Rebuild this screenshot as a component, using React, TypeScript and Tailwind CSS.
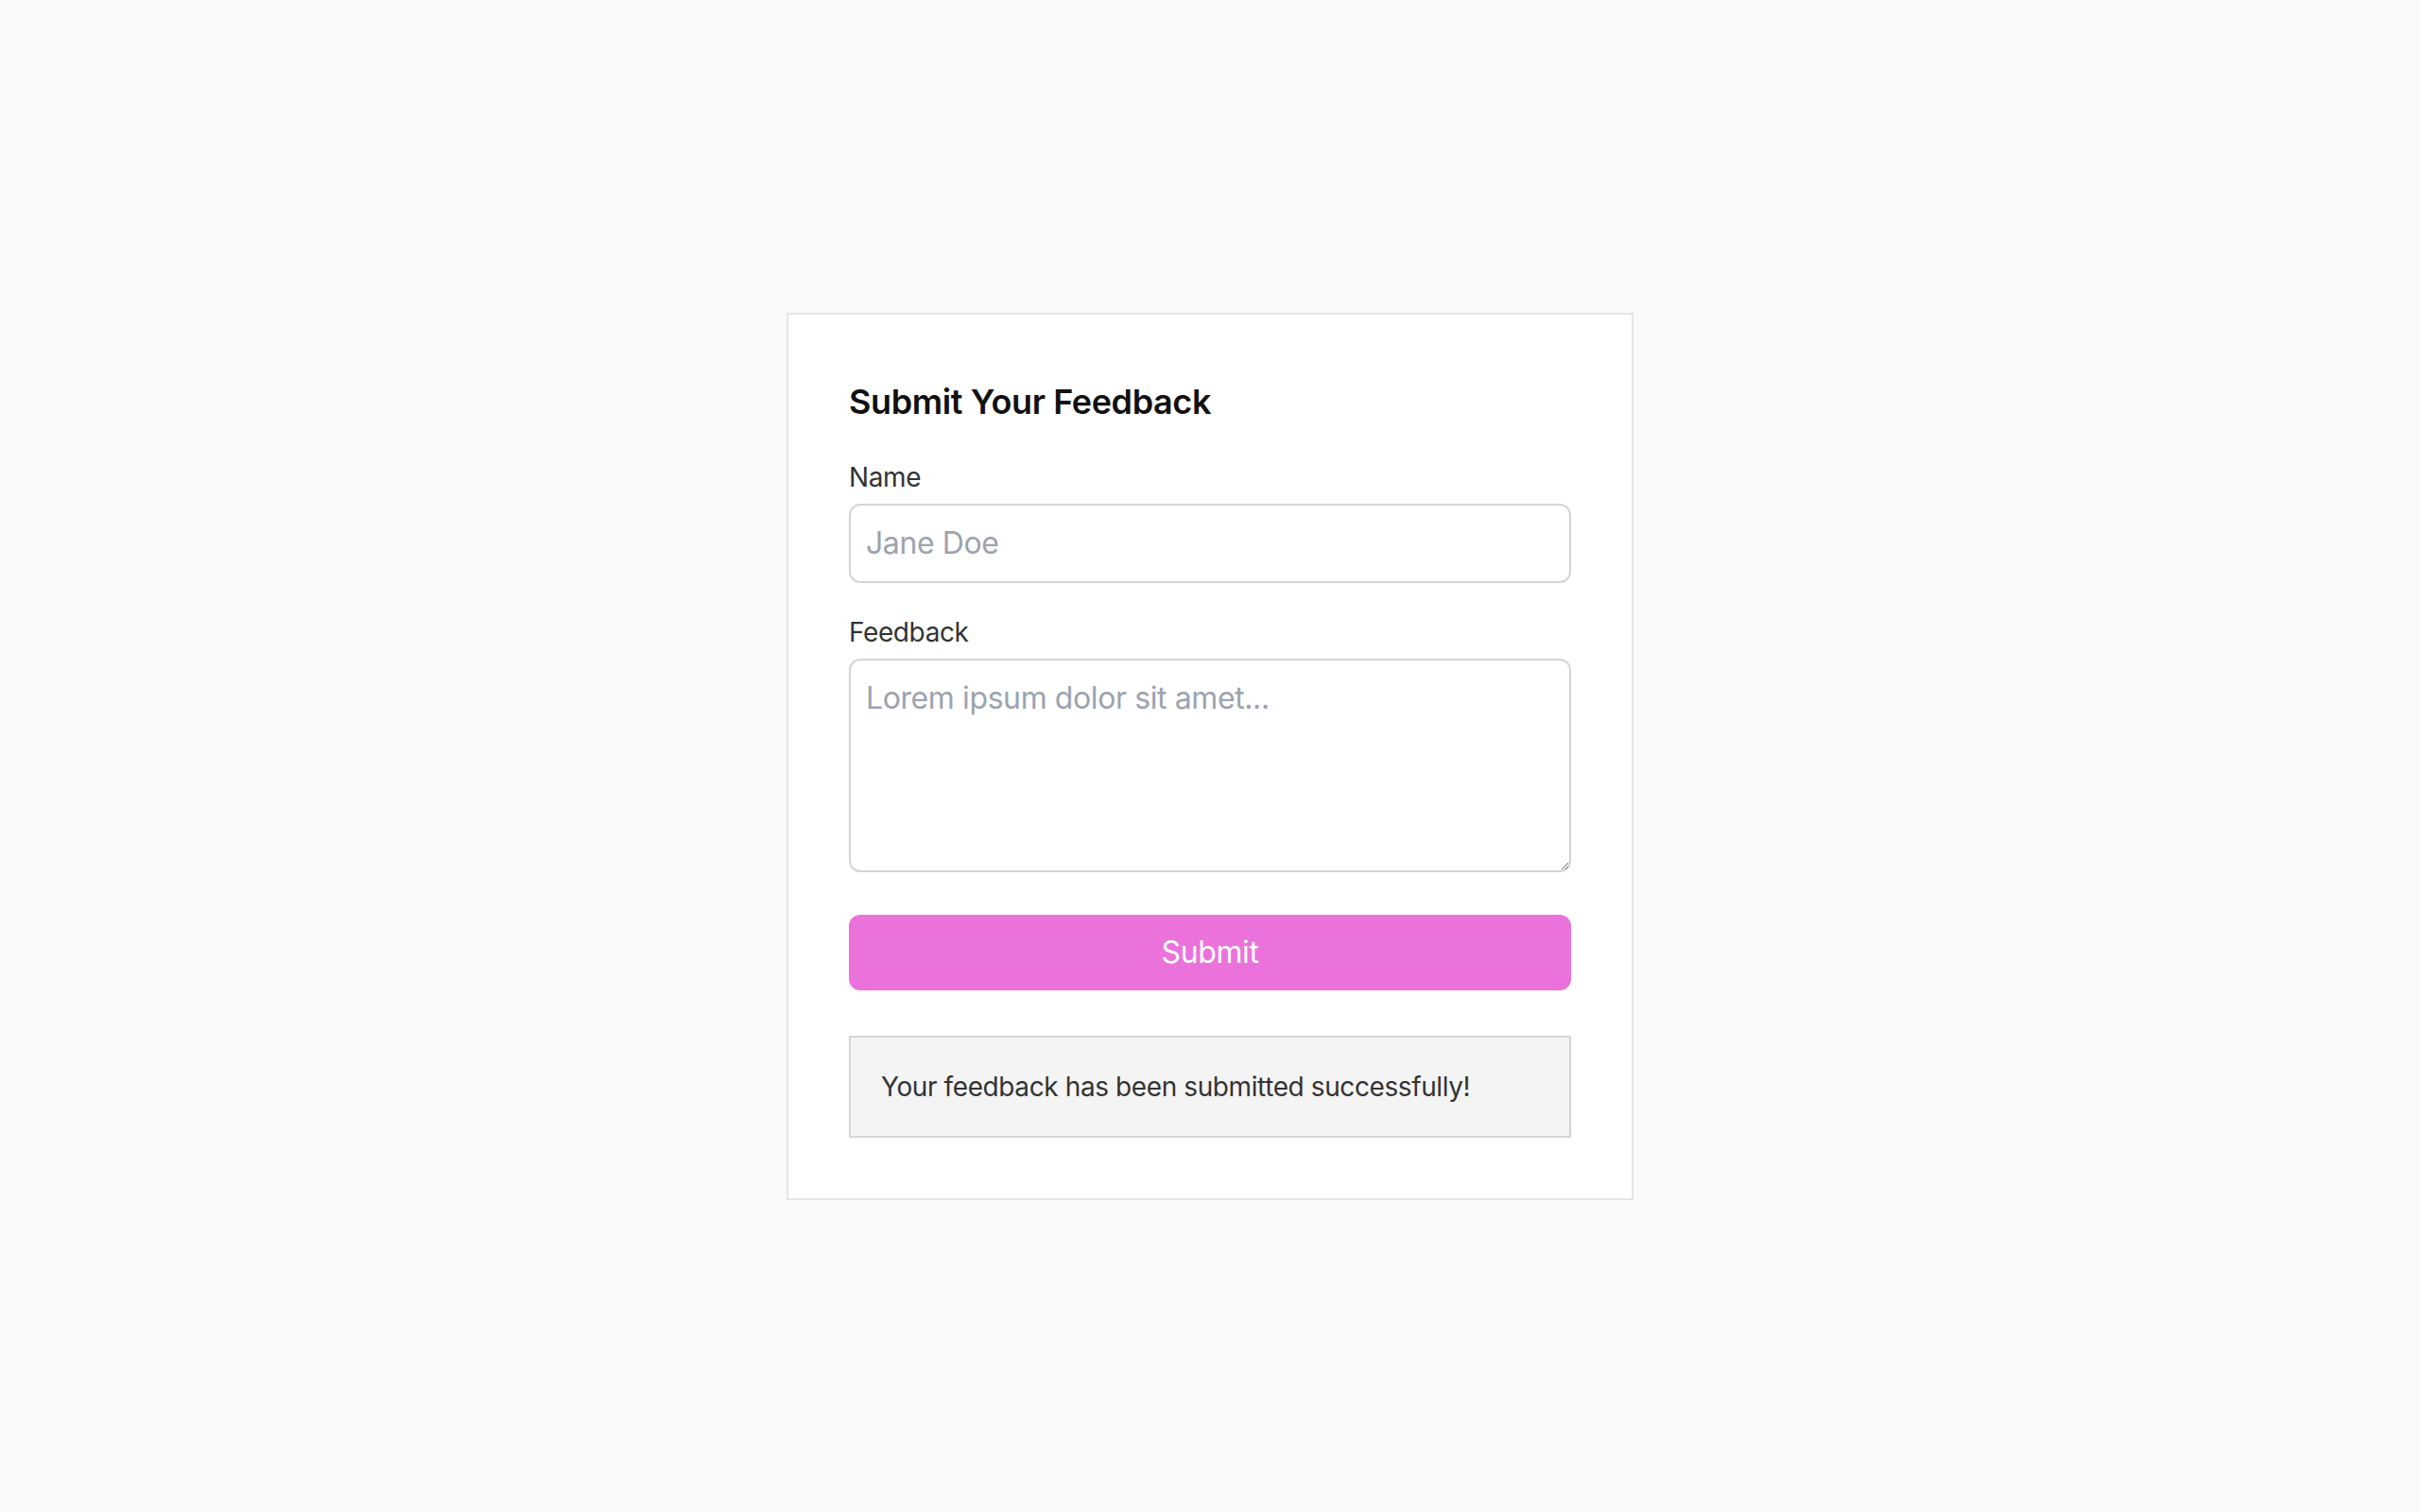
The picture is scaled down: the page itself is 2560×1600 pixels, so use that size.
export default function App() {
  return (
    <div className="min-h-screen bg-[#fafafa] flex items-center justify-center font-['Inter','Noto_Sans',sans-serif] tracking-[-0.025em]">
      <div className="w-[896px] bg-white border-2 border-[#e5e5e5] p-16">
        <h2 className="text-[36px] leading-[56px] font-semibold text-[#111111] mb-8">Submit Your Feedback</h2>

        <label className="block text-[28px] leading-[40px] text-[#333333] mb-2">Name</label>
        <input
          type="text"
          placeholder="Jane Doe"
          className="block w-full border-2 border-[#d4d4d4] rounded-xl px-4 py-4 text-[32px] leading-[48px] text-[#111111] placeholder:text-[#9ca3af] outline-none mb-8"
        />

        <label className="block text-[28px] leading-[40px] text-[#333333] mb-2">Feedback</label>
        <textarea
          placeholder="Lorem ipsum dolor sit amet..."
          className="block w-full h-[226px] border-2 border-[#d4d4d4] rounded-xl px-4 py-4 text-[32px] leading-[48px] text-[#111111] placeholder:text-[#9ca3af] outline-none"
        />

        <button className="mt-[45px] w-full h-[80px] rounded-xl bg-[#ec72db] text-white text-[32px] leading-[48px]">
          Submit
        </button>

        <div className="mt-12 border-2 border-[#d4d4d4] bg-[#f4f4f4] p-8 text-[28px] leading-[40px] text-[#333333]">
          Your feedback has been submitted successfully!
        </div>
      </div>
    </div>
  );
}
